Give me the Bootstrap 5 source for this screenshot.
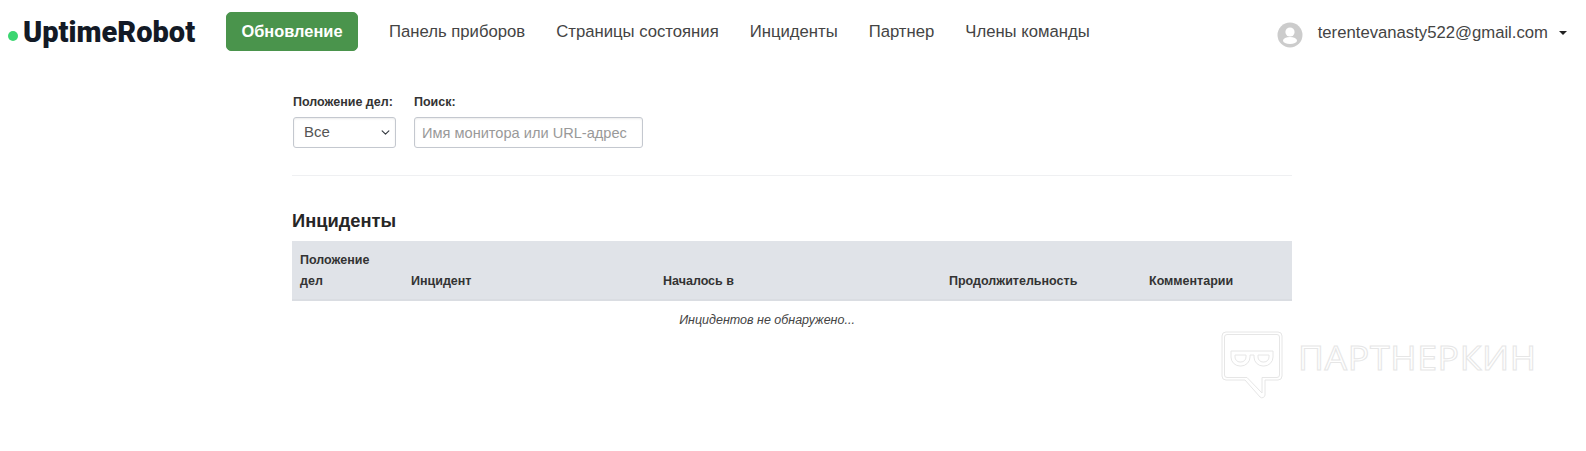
<!DOCTYPE html>
<html lang="ru">
<head>
<meta charset="utf-8">
<title>UptimeRobot</title>
<link href="https://cdn.jsdelivr.net/npm/bootstrap@5.3.0/dist/css/bootstrap.min.css" rel="stylesheet">
<style>
body{font-family:"Liberation Sans",Arial,sans-serif;color:#333;background:#fff;height:451px;overflow:hidden;position:relative}
.top-bar{height:63px;padding:0 0 0 8px}
.brand-dot{width:10px;height:10px;border-radius:50%;background:#3bd671;margin-top:9px;margin-right:5px}
.brand-name{font-family:Roboto,sans-serif;font-weight:900;font-size:29px;color:#131a26;line-height:38px;text-decoration:none;width:187px}
.upgrade-btn{background:#4a944c;border:1px solid #4a944c;color:#fff;font-weight:700;font-size:16.4px;width:132px;height:39px;padding:0;line-height:36px;border-radius:5px}
.upgrade-btn:hover{background:#4a944c;color:#fff}
.menu-link{font-size:16.7px;color:#444;text-decoration:none;margin-left:31px;line-height:20px}
.acct{margin-left:auto;margin-right:19px;font-size:16.7px;color:#444}
.avatar{margin-right:15px;margin-top:6px}
.acct-mail{padding-top:2px}
.caret{width:0;height:0;border-left:4px solid transparent;border-right:4px solid transparent;border-top:4px solid #222;margin-left:11px;margin-top:3px}
.main-wrap{width:1000px;margin-left:292px}
.filter-row{padding-top:32px;height:113px}
.filter-field{padding-left:1px}
.filter-label{font-size:12.5px;font-weight:700;color:#333;line-height:14px;margin-bottom:8px;display:block}
.status-select{width:103px;height:31px;font-size:15px;color:#555;padding:0 0 0 10px;border:1px solid #c4c8cf;border-radius:3px;box-shadow:inset 0 1px 2px rgba(0,0,0,.08);background-size:11px 9px;background-position:right 4px center}
.search-input{width:229px;height:31px;font-size:14.6px;padding:0 7px;border:1px solid #c4c8cf;border-radius:3px;box-shadow:inset 0 1px 2px rgba(0,0,0,.08)}
.search-input::placeholder{color:#999}
.filter-gap{margin-right:17px}
.rule{height:1px;background:#eff0f2;margin-top:-1px}
.section-title{font-size:18.3px;font-weight:700;color:#262626;line-height:22px;margin:34px 0 9px}
.inc-table{font-size:12.5px;table-layout:fixed;width:1000px;margin:0}
.inc-table th{background:#e0e3e8;color:#333;font-weight:700;border:0;border-bottom:2px solid #dadde2;padding:9px 8px 7px;line-height:21px;vertical-align:bottom}
.inc-table td{border:0;padding:11px 58px 10px 8px;text-align:center;font-style:italic;font-size:12.5px;color:#444;line-height:17px}
.wm{position:absolute;left:1221px;top:331px;display:flex;align-items:flex-start}
.wm-text{font-family:"Open Sans",sans-serif;font-size:33.5px;line-height:36px;font-weight:400;color:transparent;-webkit-text-stroke:1px #e6e6e6;margin:8px 0 0 15px;letter-spacing:.6px;transform:scaleX(1.065);transform-origin:left center}
</style>
</head>
<body>
<nav class="top-bar d-flex align-items-center">
  <span class="brand-dot"></span>
  <a class="brand-name" href="#">UptimeRobot</a>
  <a class="btn upgrade-btn ms-3" href="#">Обновление</a>
  <a class="menu-link" href="#">Панель приборов</a>
  <a class="menu-link" href="#">Страницы состояния</a>
  <a class="menu-link" href="#">Инциденты</a>
  <a class="menu-link" href="#">Партнер</a>
  <a class="menu-link" href="#">Члены команды</a>
  <div class="acct d-flex align-items-center">
    <svg class="avatar" width="26" height="26" viewBox="0 0 26 26"><circle cx="13" cy="13" r="12.5" fill="#ccc"/><circle cx="13" cy="10" r="4.6" fill="#fff"/><ellipse cx="13" cy="18.5" rx="7" ry="3.6" fill="#fff"/></svg>
    <span class="acct-mail">terentevanasty522@gmail.com</span>
    <span class="caret"></span>
  </div>
</nav>
<main class="main-wrap">
  <div class="filter-row d-flex">
    <div class="filter-field filter-gap">
      <label class="filter-label">Положение дел:</label>
      <select class="form-select status-select"><option>Все</option></select>
    </div>
    <div class="filter-field">
      <label class="filter-label">Поиск:</label>
      <input class="form-control search-input" type="text" placeholder="Имя монитора или URL-адрес">
    </div>
  </div>
  <div class="rule"></div>
  <h2 class="section-title">Инциденты</h2>
  <table class="table inc-table">
    <colgroup><col style="width:111px"><col style="width:252px"><col style="width:286px"><col style="width:200px"><col style="width:151px"></colgroup>
    <thead><tr><th>Положение<br>дел</th><th>Инцидент</th><th>Началось в</th><th>Продолжительность</th><th>Комментарии</th></tr></thead>
    <tbody><tr><td colspan="5">Инцидентов не обнаружено...</td></tr></tbody>
  </table>
</main>
<div class="wm">
  <svg width="62" height="70" viewBox="0 0 62 70" fill="none" stroke="#e6e6e6" stroke-width="1">
    <path d="M5 1H57a4 4 0 0 1 4 4V45a4 4 0 0 1-4 4H44V64a3 3 0 0 1-5 2L24 49H5a4 4 0 0 1-4-4V5a4 4 0 0 1 4-4Z"/>
    <path d="M6 3.500H56a2.500 2.500 0 0 1 2.500 2.500V44a2.500 2.500 0 0 1-2.500 2.500H41V62L26 46.500H6a2.500 2.500 0 0 1-2.500-2.500V6A2.500 2.500 0 0 1 6 3.500Z"/>
    <path d="M10 20H52V26a9 9 0 0 1-9 9h-1a9 9 0 0 1-9-9V24H29V26a9 9 0 0 1-9 9h-1a9 9 0 0 1-9-9Z"/>
    <path d="M14 24H25V26a5 5 0 0 1-5 5H19a5 5 0 0 1-5-5ZM37 24H48V26a5 5 0 0 1-5 5H42a5 5 0 0 1-5-5Z"/>
  </svg>
  <span class="wm-text">ПАРТНЕРКИН</span>
</div>
</body>
</html>
